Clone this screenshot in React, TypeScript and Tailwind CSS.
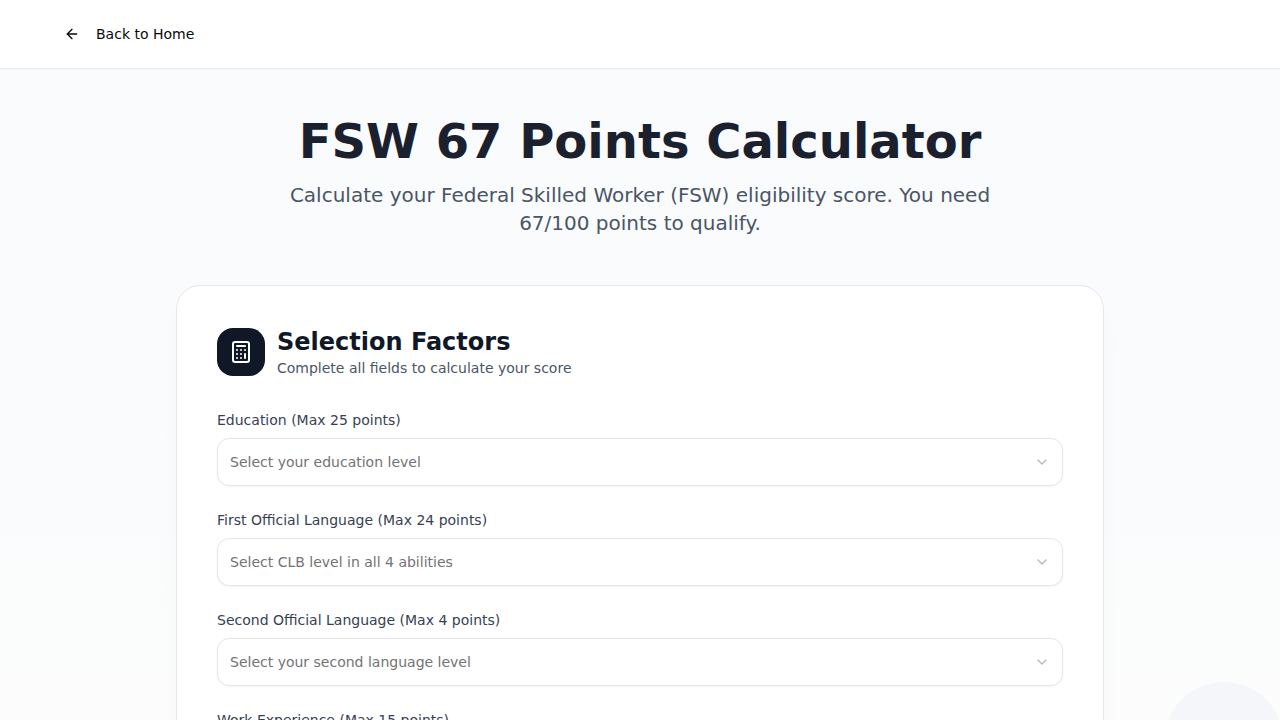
import { ArrowLeft, Calculator, ChevronDown } from "lucide-react";
import { useState } from "react";

interface Option {
  label: string;
  points: number;
}

interface Factor {
  id: string;
  label: string;
  max: number;
  placeholder: string;
  options: Option[];
}

const factors: Factor[] = [
  {
    id: "education",
    label: "Education",
    max: 25,
    placeholder: "Select your education level",
    options: [
      { label: "Doctoral degree (PhD)", points: 25 },
      { label: "Master's degree", points: 23 },
      { label: "Bachelor's degree", points: 21 },
      { label: "Secondary school", points: 5 },
    ],
  },
  {
    id: "firstLanguage",
    label: "First Official Language",
    max: 24,
    placeholder: "Select CLB level in all 4 abilities",
    options: [
      { label: "CLB 9 or higher", points: 24 },
      { label: "CLB 8", points: 20 },
      { label: "CLB 7", points: 16 },
    ],
  },
  {
    id: "secondLanguage",
    label: "Second Official Language",
    max: 4,
    placeholder: "Select your second language level",
    options: [
      { label: "CLB 5 or higher", points: 4 },
      { label: "None", points: 0 },
    ],
  },
  {
    id: "experience",
    label: "Work Experience",
    max: 15,
    placeholder: "Select your work experience",
    options: [
      { label: "6 years or more", points: 15 },
      { label: "4-5 years", points: 13 },
      { label: "2-3 years", points: 11 },
      { label: "1 year", points: 9 },
    ],
  },
];

export default function App() {
  const [values, setValues] = useState<Record<string, string>>({});

  const handleChange = (id: string, value: string) => {
    setValues((prev) => ({ ...prev, [id]: value }));
  };

  return (
    <div className="relative min-h-screen overflow-hidden bg-linear-to-b from-[#f8fafc] to-[#fdfdfd] font-['DejaVu_Sans',sans-serif]">
      {/* Header */}
      <header className="border-b border-gray-200 bg-white px-12 py-4">
        <a
          href="#"
          className="inline-flex h-9 items-center gap-4 rounded-md px-4 align-top text-sm font-medium text-neutral-950 hover:bg-gray-100"
        >
          <ArrowLeft className="h-4 w-4" />
          Back to Home
        </a>
      </header>

      {/* Decorative circle */}
      <div className="absolute top-[682px] -right-1 h-30 w-30 rounded-full bg-[#f5f6f9]" />

      <main className="relative mx-auto max-w-5xl px-12 py-12">
        {/* Title */}
        <div className="mb-12 text-center">
          <h1 className="mb-4 text-5xl leading-none font-bold text-[#1a202e]">
            FSW 67 Points Calculator
          </h1>
          <p className="mx-auto max-w-3xl px-4 text-xl text-gray-600">
            Calculate your Federal Skilled Worker (FSW) eligibility score. You need 67/100 points to
            qualify.
          </p>
        </div>

        {/* Form card */}
        <section className="rounded-3xl border border-gray-200 bg-white p-10 shadow-[0_20px_25px_-5px_rgba(15,23,42,0.04)]">
          <div className="mb-8 flex items-center gap-3">
            <div className="flex h-12 w-12 items-center justify-center rounded-2xl bg-gray-900">
              <Calculator className="h-6 w-6 text-white" />
            </div>
            <div>
              <h2 className="text-2xl font-bold text-gray-900">Selection Factors</h2>
              <p className="text-sm text-gray-600">Complete all fields to calculate your score</p>
            </div>
          </div>

          <form className="space-y-6">
            {factors.map((factor) => (
              <div key={factor.id} className="space-y-2">
                <label htmlFor={factor.id} className="block text-sm font-medium text-gray-700">
                  {factor.label} (Max {factor.max} points)
                </label>
                <div className="relative h-12 rounded-xl border border-neutral-200 bg-white shadow-xs">
                  <select
                    id={factor.id}
                    value={values[factor.id] ?? ""}
                    onChange={(e) => handleChange(factor.id, e.target.value)}
                    className="h-full w-full appearance-none rounded-xl px-3 text-sm text-neutral-500"
                  >
                    <option value="" disabled>
                      {factor.placeholder}
                    </option>
                    {factor.options.map((option) => (
                      <option key={option.label} value={option.label}>
                        {option.label} - {option.points} points
                      </option>
                    ))}
                  </select>
                  <ChevronDown className="pointer-events-none absolute inset-y-0 right-3 my-auto h-4 w-4 text-neutral-500 opacity-50" />
                </div>
              </div>
            ))}
          </form>
        </section>
      </main>
    </div>
  );
}
